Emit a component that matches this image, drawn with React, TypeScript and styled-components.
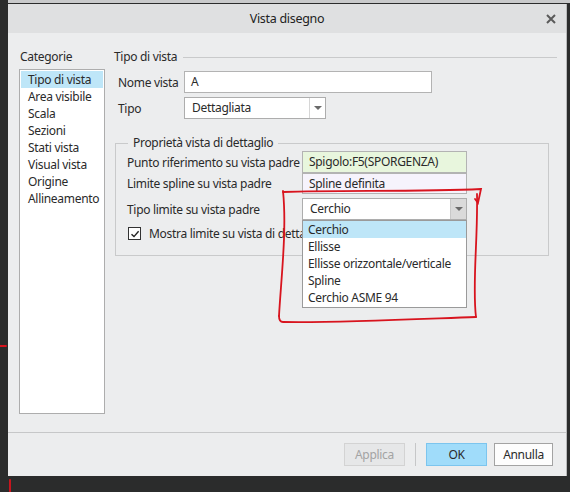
import styled, { createGlobalStyle } from "styled-components";

const GlobalStyle = createGlobalStyle`
  html, body {
    margin: 0;
    padding: 0;
    background: #2b2c2c;
  }
  body {
    font-family: "Noto Sans", "Open Sans", sans-serif;
    font-size: 12px;
    letter-spacing: -0.3px;
    color: #2a2a2a;
  }
`;

const Page = styled.div`
  position: relative;
  width: 570px;
  height: 492px;
  overflow: hidden;
  display: flex;
  flex-direction: column;
`;

const TopStrip = styled.div`
  height: 3px;
  margin-left: 8px;
  background: #c9cacb;
`;

const Dialog = styled.div`
  position: relative;
  margin: 1px 0 0 8px;
  width: 558px;
  height: 472px;
  background: #ecedee;
  border-right: 1px solid #b9babb;
  display: flex;
  flex-direction: column;
`;

const TitleBar = styled.div`
  height: 29px;
  background: #dfe0e1;
  display: grid;
  grid-template-columns: 1fr auto 1fr;
  align-items: center;
  font-size: 12.5px;
  color: #222;
`;

const CloseButton = styled.div`
  justify-self: end;
  margin-right: 10px;
  width: 11px;
  height: 11px;
  display: flex;
  align-items: center;
  justify-content: center;
`;

const Body = styled.div`
  flex: 1;
  display: flex;
  padding: 15px 9px 0 11px;
  gap: 9px;
`;

const LeftColumn = styled.div`
  width: 86px;
  display: flex;
  flex-direction: column;
`;

const Caption = styled.div`
  height: 21px;
  line-height: 18px;
  padding-left: 1px;
`;

const CategoryList = styled.div`
  height: 342px;
  background: #fff;
  border: 1px solid #adadad;
  padding-top: 1px;
  display: flex;
  flex-direction: column;
`;

const CategoryItem = styled.div<{ $selected?: boolean }>`
  height: 17px;
  line-height: 17px;
  padding-left: 7px;
  margin: 0 1px;
  background: ${(p) => (p.$selected ? "#bee6f8" : "transparent")};
  white-space: nowrap;
`;

const RightColumn = styled.div`
  flex: 1;
  display: flex;
  flex-direction: column;
`;

const SectionHeader = styled.div`
  display: flex;
  align-items: center;
  gap: 6px;
  height: 20px;
  line-height: 18px;
  margin-top: -1px;
`;

const HeaderRule = styled.div`
  flex: 1;
  height: 1px;
  background: #c9cacb;
`;

const FormRow = styled.div`
  display: flex;
  align-items: center;
  height: 22px;
  margin-top: 4px;
  padding-left: 4px;
`;

const RowLabel = styled.div<{ $width: number }>`
  width: ${(p) => p.$width}px;
  flex-shrink: 0;
  white-space: nowrap;
`;

const TextField = styled.div<{ $width: number; $height?: number; $bg?: string }>`
  box-sizing: border-box;
  width: ${(p) => p.$width}px;
  height: ${(p) => p.$height || 22}px;
  line-height: ${(p) => (p.$height || 22) - 2}px;
  padding-left: 6px;
  background: ${(p) => p.$bg || "#fff"};
  border: 1px solid #b3b3b3;
  white-space: nowrap;
`;

const SelectBox = styled.div<{ $width: number }>`
  box-sizing: border-box;
  width: ${(p) => p.$width}px;
  height: 22px;
  background: #fff;
  border: 1px solid #adadad;
  display: flex;
`;

const SelectValue = styled.div`
  flex: 1;
  line-height: 20px;
  padding-left: 7px;
`;

const SelectArrow = styled.div<{ $open?: boolean }>`
  width: 15px;
  display: flex;
  align-items: center;
  justify-content: center;
  border-left: 1px solid ${(p) => (p.$open ? "#c8c8c8" : "#d6d6d6")};
  background: ${(p) => (p.$open ? "#dadada" : "#fff")};
  &::after {
    content: "";
    border-left: 4px solid transparent;
    border-right: 4px solid transparent;
    border-top: 4px solid #6a6a6a;
  }
`;

const GroupBox = styled.fieldset`
  margin: 17px 8px 0 1px;
  padding: 1px 0 8px 11px;
  border: 1px solid #c9cacb;
  min-width: 0;
`;

const GroupLegend = styled.legend`
  margin-left: 1px;
  padding: 0 5px;
  line-height: 14px;
`;

const DetailRow = styled.div<{ $height: number; $gap?: number }>`
  position: relative;
  display: flex;
  align-items: center;
  height: ${(p) => p.$height}px;
  margin-top: ${(p) => p.$gap || 0}px;
`;

const CheckRow = styled.div`
  display: flex;
  align-items: center;
  gap: 8px;
  height: 27px;
  padding-left: 1px;
  white-space: nowrap;
`;

const CheckBox = styled.div`
  width: 11px;
  height: 11px;
  border: 1px solid #333;
  background: #fff;
  display: flex;
  align-items: center;
  justify-content: center;
`;

const DropList = styled.div`
  position: absolute;
  left: 175px;
  top: 22px;
  box-sizing: border-box;
  width: 165px;
  background: #fff;
  border: 1px solid #9a9a9a;
  padding: 0 0 1px;
  z-index: 2;
`;

const DropItem = styled.div<{ $selected?: boolean }>`
  height: 17px;
  line-height: 17px;
  padding-left: 5px;
  background: ${(p) => (p.$selected ? "#bee6f8" : "transparent")};
  white-space: nowrap;
`;

const Footer = styled.div`
  height: 43px;
  border-top: 1px solid #c6c7c8;
  display: flex;
  align-items: center;
  justify-content: flex-end;
  padding-right: 13px;
  gap: 7px;
`;

const FooterButton = styled.div<{ $variant: "disabled" | "primary" | "normal" }>`
  box-sizing: border-box;
  width: ${(p) => (p.$variant === "normal" ? 59 : 61)}px;
  height: 23px;
  line-height: 21px;
  text-align: center;
  border: 1px solid
    ${(p) =>
      p.$variant === "primary"
        ? "#7cc5ee"
        : p.$variant === "disabled"
        ? "#d3d3d3"
        : "#a3a3a3"};
  background: ${(p) =>
    p.$variant === "primary"
      ? "#a0dcfa"
      : p.$variant === "disabled"
      ? "#e6e7e8"
      : "#fdfdfd"};
  color: ${(p) => (p.$variant === "disabled" ? "#a3a3a3" : "#2a2a2a")};
`;

const ButtonDivider = styled.div`
  width: 1px;
  height: 23px;
  background: #c6c7c8;
  margin: 0 3px;
`;

const Annotation = styled.svg`
  position: absolute;
  left: 0;
  top: 0;
  pointer-events: none;
  z-index: 5;
`;

const categories = [
  "Tipo di vista",
  "Area visibile",
  "Scala",
  "Sezioni",
  "Stati vista",
  "Visual vista",
  "Origine",
  "Allineamento",
];

const options = [
  "Cerchio",
  "Ellisse",
  "Ellisse orizzontale/verticale",
  "Spline",
  "Cerchio ASME 94",
];

export default function App() {
  return (
    <Page>
      <GlobalStyle />
      <TopStrip />
      <Dialog>
        <TitleBar>
          <span />
          <span>Vista disegno</span>
          <CloseButton>
            <svg width="10" height="10" viewBox="0 0 10 10">
              <path d="M1 1L9 9M9 1L1 9" stroke="#5a5a5a" strokeWidth="2" />
            </svg>
          </CloseButton>
        </TitleBar>
        <Body>
          <LeftColumn>
            <Caption>Categorie</Caption>
            <CategoryList>
              {categories.map((c, i) => (
                <CategoryItem key={c} $selected={i === 0}>
                  {c}
                </CategoryItem>
              ))}
            </CategoryList>
          </LeftColumn>
          <RightColumn>
            <SectionHeader>
              <span>Tipo di vista</span>
              <HeaderRule />
            </SectionHeader>
            <FormRow>
              <RowLabel $width={66}>Nome vista</RowLabel>
              <TextField $width={248}>A</TextField>
            </FormRow>
            <FormRow>
              <RowLabel $width={66}>Tipo</RowLabel>
              <SelectBox $width={142}>
                <SelectValue>Dettagliata</SelectValue>
                <SelectArrow />
              </SelectBox>
            </FormRow>
            <GroupBox>
              <GroupLegend>Proprietà vista di dettaglio</GroupLegend>
              <DetailRow $height={22}>
                <RowLabel $width={175}>Punto riferimento su vista padre</RowLabel>
                <TextField $width={165} $bg="#e8f6dd">
                  Spigolo:F5(SPORGENZA)
                </TextField>
              </DetailRow>
              <DetailRow $height={20}>
                <RowLabel $width={175}>Limite spline su vista padre</RowLabel>
                <TextField $width={165} $height={21} $bg="#f6f3fc">
                  Spline definita
                </TextField>
              </DetailRow>
              <DetailRow $height={22} $gap={5}>
                <RowLabel $width={175}>Tipo limite su vista padre</RowLabel>
                <SelectBox $width={165}>
                  <SelectValue>Cerchio</SelectValue>
                  <SelectArrow $open />
                </SelectBox>
                <DropList>
                  {options.map((o, i) => (
                    <DropItem key={o} $selected={i === 0}>
                      {o}
                    </DropItem>
                  ))}
                </DropList>
              </DetailRow>
              <CheckRow>
                <CheckBox>
                  <svg width="10" height="10" viewBox="0 0 10 10">
                    <path d="M1.5 5.2L4 7.6L8.6 2.2" fill="none" stroke="#222" strokeWidth="1.4" />
                  </svg>
                </CheckBox>
                <span>Mostra limite su vista di dettaglio</span>
              </CheckRow>
            </GroupBox>
          </RightColumn>
        </Body>
        <Footer>
          <FooterButton $variant="disabled">Applica</FooterButton>
          <ButtonDivider />
          <FooterButton $variant="primary">OK</FooterButton>
          <FooterButton $variant="normal">Annulla</FooterButton>
        </Footer>
      </Dialog>
      <Annotation width="570" height="492" viewBox="0 0 570 492">
        <g fill="none" stroke="#d8141e" strokeWidth="1.8" strokeLinecap="round">
          <path d="M283 192 C340 190 420 192 481 189 L478 203 L475 199" />
          <path d="M477 194 C478 240 472 285 476 317" />
          <path d="M476 317 C420 319 340 323 283 322 C280 322 279 320 279 316" />
          <path d="M283 191 C287 230 281 280 279 316" />
          <path d="M0 346 L6 346" />
          <path d="M10 480 L10 492" />
        </g>
      </Annotation>
    </Page>
  );
}
